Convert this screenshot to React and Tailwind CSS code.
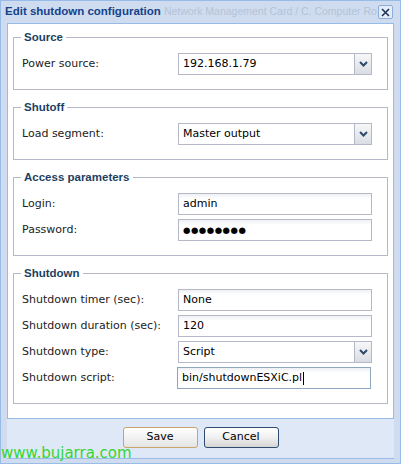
import React from 'react';

const ui = { fontFamily: '"DejaVu Sans", Verdana, sans-serif' };
const head = { fontFamily: '"Liberation Sans", Arial, sans-serif' };

function Arrow() {
    return (
        <div className="w-[17px] h-full border-l border-[#b5b8c8] bg-gradient-to-b from-[#f7f7f7] to-[#d9dde3] flex items-center justify-center">
            <svg width="9" height="6" viewBox="0 0 9 6">
                <path d="M1 1 L4.5 4.5 L8 1" stroke="#2c4a6e" strokeWidth="2" fill="none" />
            </svg>
        </div>
    );
}

function Field({ label, children }) {
    return (
        <div className="flex items-center h-[22px]">
            <div className="w-[156px] text-[11px] text-[#222]">{label}</div>
            {children}
        </div>
    );
}

function TextBox({ value, focused }) {
    return (
        <div className={`w-[194px] h-[22px] border ${focused ? 'border-[#8fa6bf] -ml-[1px]' : 'border-[#b5b8c8]'} bg-white bg-gradient-to-b from-[#eef0f3] to-white to-[25%] flex items-center px-[4px] text-[11px] text-black whitespace-nowrap`}>
            {value}
            {focused && <span className="inline-block w-[1px] h-[13px] bg-black ml-[1px]" />}
        </div>
    );
}

function Select({ value }) {
    return (
        <div className="w-[194px] h-[22px] border border-[#b5b8c8] bg-white flex items-center text-[11px] text-black">
            <div className="flex-1 px-[4px]">{value}</div>
            <Arrow />
        </div>
    );
}

function Group({ title, children }) {
    return (
        <fieldset className="mx-[5px] border border-[#b5b8c8] pl-[8px] pr-[15px] pb-[14px]">
            <legend style={head} className="-ml-[1px] px-[3px] text-[11.5px] leading-[14px] font-bold text-[#1e3f62]">
                {title}
            </legend>
            <div className="flex flex-col gap-[4px] pt-[9px]">{children}</div>
        </fieldset>
    );
}

export default function App() {
    return (
        <div style={ui} className="relative w-[401px] h-[464px] overflow-hidden bg-[#cfdcef] border border-[#99bbe8]">
            {/* Title bar */}
            <div className="h-[22px] flex items-center pl-[4px] pr-[7px]">
                <span style={head} className="text-[11.5px] font-bold text-[#15428b] whitespace-nowrap">
                    Edit shutdown configuration
                </span>
                <span style={head} className="flex-1 whitespace-nowrap ml-[3px] text-[10.5px] text-[#b3c3d8]">
                    Network Management Card / C. Computer Ro
                </span>
                <div className="w-[15px] h-[14px] border border-[#8eaed6] rounded-[2px] bg-[#e4ecf7] flex items-center justify-center">
                    <svg width="9" height="9" viewBox="0 0 9 9">
                        <path d="M1 1 L8 8 M8 1 L1 8" stroke="#1b3558" strokeWidth="1.6" />
                    </svg>
                </div>
            </div>

            {/* Body */}
            <div className="mx-[6px] h-[396px] bg-white border border-[#99bbe8] pt-[6px] flex flex-col gap-[10px]">
                <Group title="Source">
                    <Field label="Power source:"><Select value="192.168.1.79" /></Field>
                </Group>
                <Group title="Shutoff">
                    <Field label="Load segment:"><Select value="Master output" /></Field>
                </Group>
                <Group title="Access parameters">
                    <Field label="Login:"><TextBox value="admin" /></Field>
                    <Field label="Password:">
                        <TextBox value={<span className="text-[8.5px] tracking-[0.5px]">●●●●●●●●</span>} />
                    </Field>
                </Group>
                <Group title="Shutdown">
                    <Field label="Shutdown timer (sec):"><TextBox value="None" /></Field>
                    <Field label="Shutdown duration (sec):"><TextBox value="120" /></Field>
                    <Field label="Shutdown type:"><Select value="Script" /></Field>
                    <Field label="Shutdown script:"><TextBox value="bin/shutdownESXiC.pl" focused /></Field>
                </Group>
            </div>

            {/* Button bar */}
            <div className="mx-[6px] h-[40px] bg-[#dfe8f6] border-b border-[#99bbe8] flex justify-center gap-[6px] pt-[8px]">
                <button className="w-[75px] h-[21px] rounded-[3px] border border-[#c9a46a] bg-gradient-to-b from-white to-[#e4e4e4] text-[11px] text-black">
                    Save
                </button>
                <button className="w-[75px] h-[21px] rounded-[3px] border border-[#2f4c6e] bg-gradient-to-b from-white via-[#f0f0f0] to-[#d6d6d6] text-[11px] text-black">
                    Cancel
                </button>
            </div>

            {/* Watermark */}
            <div className="absolute left-0 top-[444px] text-[15px] leading-[17px] text-[#33d633] whitespace-nowrap">
                www.bujarra.com
            </div>
        </div>
    );
}
